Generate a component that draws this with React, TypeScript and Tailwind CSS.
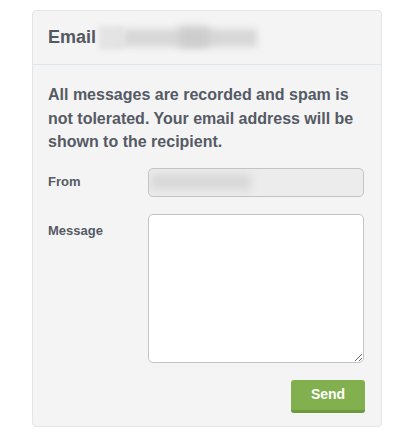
import React from "react";

export default function App() {
  return (
    <div className="w-[412px] h-[435px] bg-white pt-[10px] pl-[32px]" style={{ fontFamily: '"Liberation Sans", Arial, sans-serif' }}>
      <div className="w-[350px] h-[417px] bg-[#f4f4f4] border border-[#e2e6e8] rounded-[4px] flex flex-col">
        <div className="h-[54px] border-b border-[#dce6ec] flex items-center pl-[15px]">
          <span className="text-[18px] font-bold text-[#535862]">Email</span>
          <span className="ml-[3px] relative w-[160px] h-[26px]">
            <span className="absolute left-[0px] top-[1px] w-[24px] h-[24px] bg-[#e4e4e4] blur-[2px]" />
            <span className="absolute left-[24px] top-[4px] w-[134px] h-[18px] bg-[#d8d8d8] blur-[3px]" />
            <span className="absolute left-[80px] top-[2px] w-[30px] h-[20px] bg-[#cdcdcd] blur-[4px]" />
          </span>
        </div>
        <div className="px-[15px] pt-[18px]">
          <p className="text-[16px] leading-[23.5px] font-bold text-[#555a64]">
            All messages are recorded and spam is not tolerated. Your email address will be shown to the recipient.
          </p>
          <div className="mt-[14px] flex items-center">
            <span className="w-[100px] text-[13px] font-bold text-[#555a64]">From</span>
            <div className="w-[216px] h-[29px] rounded-[5px] border border-[#c4c4c4] bg-[#ececec] relative overflow-hidden">
              <span className="absolute left-[2px] top-[5px] w-[100px] h-[16px] bg-[#d8d8d8] blur-[4px]" />
            </div>
          </div>
          <div className="mt-[17px] flex items-start">
            <span className="w-[100px] pt-[7px] text-[13px] font-bold text-[#555a64]">Message</span>
            <textarea className="w-[216px] h-[149px] rounded-[5px] border border-[#c4c4c4] bg-white outline-none" />
          </div>
          <div className="mt-[17px] flex justify-end pr-[1px]">
            <button className="w-[74px] h-[33px] rounded-[3px] bg-[#82b04e] border-b-[3px] border-[#6e9a3e] text-white text-[14px] font-bold">
              Send
            </button>
          </div>
        </div>
      </div>
    </div>
  );
}
